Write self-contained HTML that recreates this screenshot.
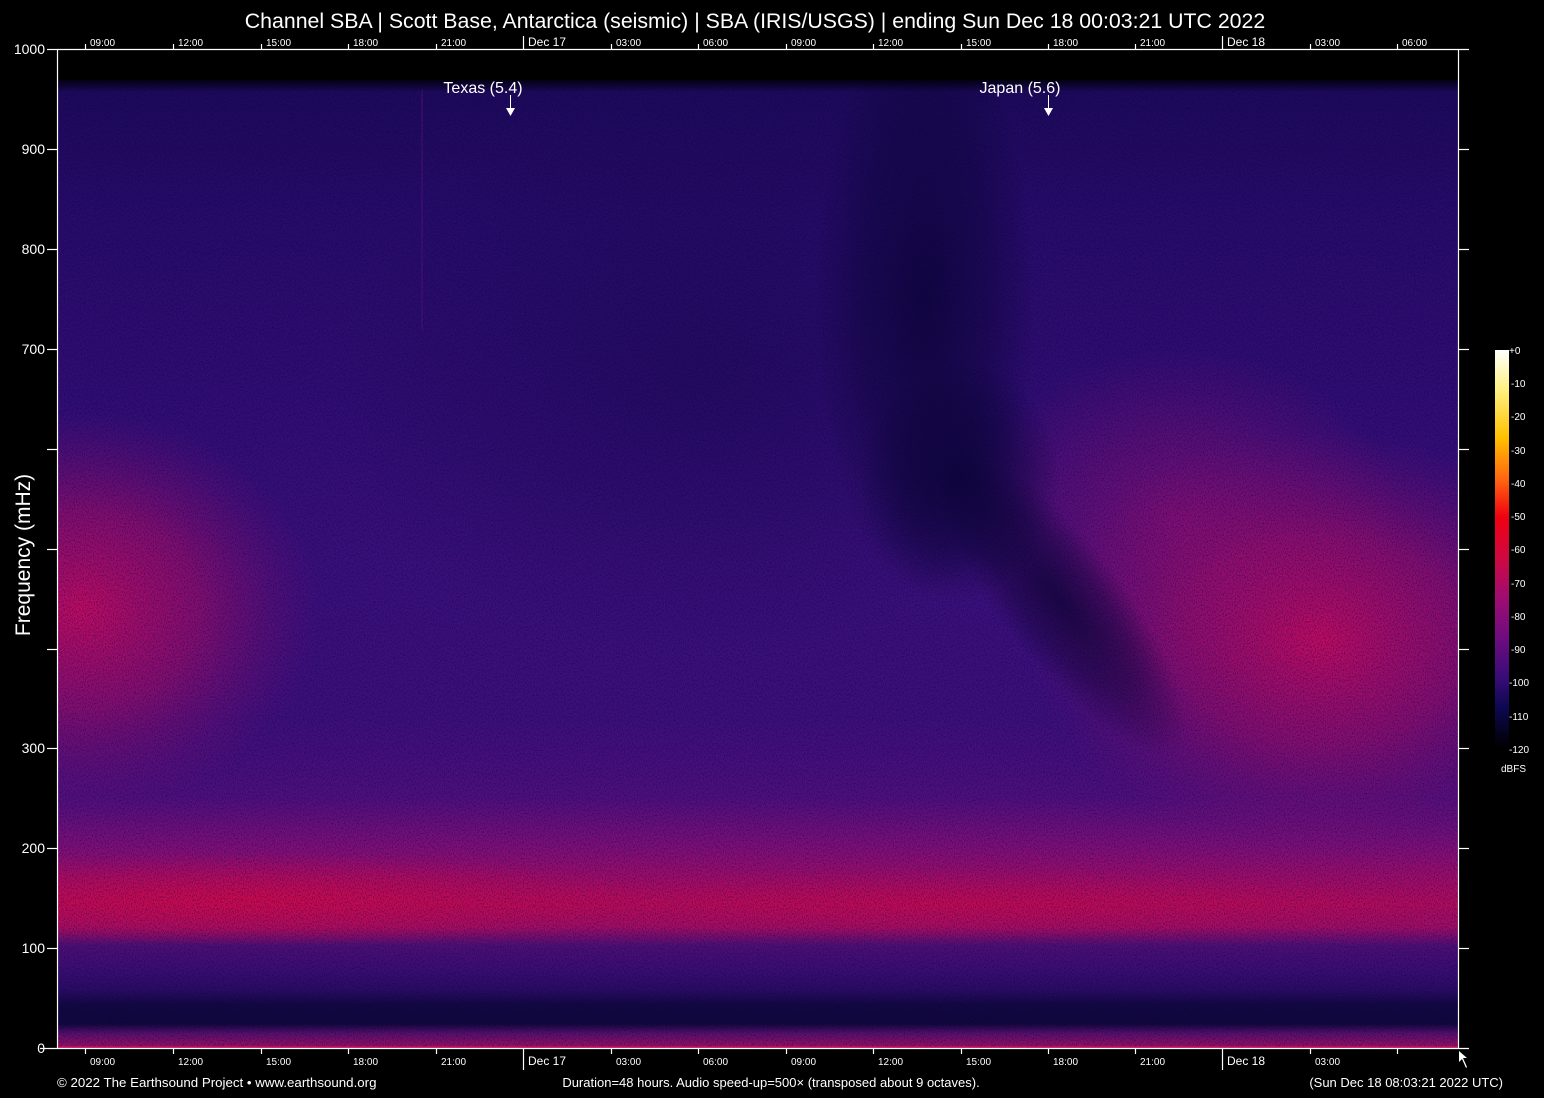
<!DOCTYPE html>
<html><head><meta charset="utf-8">
<style>
html,body{margin:0;padding:0;background:#000;}
svg{display:block;}
text{font-family:"Liberation Sans",Arial,sans-serif;fill:#fff;}
</style></head>
<body>
<svg width="1544" height="1098" viewBox="0 0 1544 1098" xmlns="http://www.w3.org/2000/svg">
<defs>
  <linearGradient id="base" x1="0" y1="80" x2="0" y2="1048" gradientUnits="userSpaceOnUse">
    <stop offset="0" stop-color="#1e0a56"/>
    <stop offset="0.15" stop-color="#2a0c68"/>
    <stop offset="0.35" stop-color="#340e72"/>
    <stop offset="0.5" stop-color="#3c1078"/>
    <stop offset="0.66" stop-color="#3e1078"/>
    <stop offset="0.74" stop-color="#50107a"/>
    <stop offset="0.79" stop-color="#7e1076"/>
    <stop offset="0.82" stop-color="#9c0e68"/>
    <stop offset="0.85" stop-color="#b40c5a"/>
    <stop offset="0.875" stop-color="#a20e62"/>
    <stop offset="0.895" stop-color="#4e1072"/>
    <stop offset="0.92" stop-color="#3c0e6e"/>
    <stop offset="0.94" stop-color="#2c0c62"/>
    <stop offset="0.955" stop-color="#14083e"/>
    <stop offset="0.975" stop-color="#12083a"/>
    <stop offset="0.985" stop-color="#5a1068"/>
    <stop offset="1" stop-color="#a01060"/>
  </linearGradient>
  <radialGradient id="mag"><stop offset="0" stop-color="#c00c5e" stop-opacity="1"/><stop offset="0.5" stop-color="#a80e66" stop-opacity="0.65"/><stop offset="1" stop-color="#800e70" stop-opacity="0"/></radialGradient>
  <radialGradient id="mag2"><stop offset="0" stop-color="#8a1072" stop-opacity="0.8"/><stop offset="1" stop-color="#8a1072" stop-opacity="0"/></radialGradient>
  <radialGradient id="dark"><stop offset="0" stop-color="#0a0430" stop-opacity="0.75"/><stop offset="0.6" stop-color="#0a0430" stop-opacity="0.4"/><stop offset="1" stop-color="#0a0430" stop-opacity="0"/></radialGradient>
  <radialGradient id="dark2"><stop offset="0" stop-color="#140844" stop-opacity="0.4"/><stop offset="1" stop-color="#140844" stop-opacity="0"/></radialGradient>
  <radialGradient id="red"><stop offset="0" stop-color="#d80a44" stop-opacity="0.7"/><stop offset="1" stop-color="#d80a44" stop-opacity="0"/></radialGradient>
  <linearGradient id="cbar" x1="0" y1="0" x2="0" y2="1">
    <stop offset="0" stop-color="#ffffff"/>
    <stop offset="0.1" stop-color="#fff080"/>
    <stop offset="0.22" stop-color="#ffc000"/>
    <stop offset="0.33" stop-color="#ff6010"/>
    <stop offset="0.42" stop-color="#f00010"/>
    <stop offset="0.52" stop-color="#d00840"/>
    <stop offset="0.62" stop-color="#a00c70"/>
    <stop offset="0.72" stop-color="#700c80"/>
    <stop offset="0.82" stop-color="#3a0c78"/>
    <stop offset="0.9" stop-color="#0c0850"/>
    <stop offset="1" stop-color="#000000"/>
  </linearGradient>
  <linearGradient id="topfade" x1="0" y1="0" x2="0" y2="1">
    <stop offset="0" stop-color="#000"/>
    <stop offset="1" stop-color="#000" stop-opacity="0"/>
  </linearGradient>
  <filter id="noise" x="0" y="0" width="100%" height="100%">
    <feTurbulence type="fractalNoise" baseFrequency="0.9 0.6" numOctaves="2" seed="3"/>
    <feColorMatrix type="matrix" values="0 0 0 0 0  0 0 0 0 0  0 0 0 0 0.1  0 0 0 -2.2 1.25"/>
  </filter>
  <clipPath id="plot"><rect x="58" y="50" width="1400" height="998"/></clipPath>
</defs>

<rect width="1544" height="1098" fill="#000"/>

<g clip-path="url(#plot)">
  <rect x="58" y="80" width="1400" height="968" fill="url(#base)"/>
  <ellipse cx="700" cy="380" rx="380" ry="280" fill="url(#dark2)"/>
  <ellipse cx="80" cy="610" rx="240" ry="200" fill="url(#mag)"/>
  <ellipse cx="1180" cy="520" rx="220" ry="170" fill="url(#mag2)"/>
  <ellipse cx="1320" cy="640" rx="290" ry="210" fill="url(#mag)"/>
  <ellipse cx="925" cy="300" rx="110" ry="300" fill="url(#dark)"/>
  <ellipse cx="1060" cy="600" rx="60" ry="190" transform="rotate(-38 1060 600)" fill="url(#dark)"/>
  <ellipse cx="960" cy="480" rx="100" ry="120" fill="url(#dark)"/>
  <ellipse cx="250" cy="900" rx="420" ry="45" fill="url(#red)"/>
  <ellipse cx="950" cy="905" rx="500" ry="35" fill="url(#red)" opacity="0.6"/>
  <rect x="421" y="90" width="2" height="240" fill="#5a1478" opacity="0.4"/>
  <rect x="58" y="50" width="1400" height="30" fill="#000"/>
  <rect x="58" y="78" width="1400" height="14" fill="url(#topfade)"/>
  <rect x="58" y="80" width="1400" height="968" filter="url(#noise)" opacity="0.55"/>
</g>

<g stroke="#fff" stroke-width="1.2" fill="none">
  <line x1="57" y1="49.5" x2="1469" y2="49.5"/>
  <line x1="57.5" y1="49" x2="57.5" y2="1049"/>
  <line x1="1458.5" y1="49" x2="1458.5" y2="1049"/>
  <line x1="40" y1="1048.5" x2="1469" y2="1048.5"/>
  <line x1="47" y1="49.5" x2="57" y2="49.5"/>
  <line x1="47" y1="149.5" x2="57" y2="149.5"/>
  <line x1="47" y1="249.5" x2="57" y2="249.5"/>
  <line x1="47" y1="349.5" x2="57" y2="349.5"/>
  <line x1="47" y1="449.5" x2="57" y2="449.5"/>
  <line x1="47" y1="549.5" x2="57" y2="549.5"/>
  <line x1="47" y1="649.5" x2="57" y2="649.5"/>
  <line x1="47" y1="748.5" x2="57" y2="748.5"/>
  <line x1="47" y1="848.5" x2="57" y2="848.5"/>
  <line x1="47" y1="948.5" x2="57" y2="948.5"/>
  <line x1="1459" y1="149.5" x2="1469" y2="149.5"/>
  <line x1="1459" y1="249.5" x2="1469" y2="249.5"/>
  <line x1="1459" y1="349.5" x2="1469" y2="349.5"/>
  <line x1="1459" y1="449.5" x2="1469" y2="449.5"/>
  <line x1="1459" y1="549.5" x2="1469" y2="549.5"/>
  <line x1="1459" y1="649.5" x2="1469" y2="649.5"/>
  <line x1="1459" y1="748.5" x2="1469" y2="748.5"/>
  <line x1="1459" y1="848.5" x2="1469" y2="848.5"/>
  <line x1="1459" y1="948.5" x2="1469" y2="948.5"/>
  <path d="M85.5 49V44 M173.5 49V44 M261.5 49V44 M348.5 49V44 M436.5 49V44 M523.5 49V36 M611.5 49V44 M698.5 49V44 M786.5 49V44 M873.5 49V44 M961.5 49V44 M1048.5 49V44 M1135.5 49V44 M1222.5 49V36 M1310.5 49V44 M1397.5 49V44"/>
  <path d="M85.5 1049V1054 M173.5 1049V1054 M261.5 1049V1054 M348.5 1049V1054 M436.5 1049V1054 M523.5 1049V1070 M611.5 1049V1054 M698.5 1049V1054 M786.5 1049V1054 M873.5 1049V1054 M961.5 1049V1054 M1048.5 1049V1054 M1135.5 1049V1054 M1222.5 1049V1070 M1310.5 1049V1054 M1397.5 1049V1054"/>
</g>
<line x1="58" y1="1047" x2="1458" y2="1047" stroke="#e0105a" stroke-width="1"/>

<text x="755" y="28" font-size="21.3" text-anchor="middle">Channel SBA | Scott Base, Antarctica (seismic) | SBA (IRIS/USGS) | ending Sun Dec 18 00:03:21 UTC 2022</text>

<g font-size="10">
  <text x="90" y="46">09:00</text>
  <text x="178" y="46">12:00</text>
  <text x="266" y="46">15:00</text>
  <text x="353" y="46">18:00</text>
  <text x="441" y="46">21:00</text>
  <text x="616" y="46">03:00</text>
  <text x="703" y="46">06:00</text>
  <text x="791" y="46">09:00</text>
  <text x="878" y="46">12:00</text>
  <text x="966" y="46">15:00</text>
  <text x="1053" y="46">18:00</text>
  <text x="1140" y="46">21:00</text>
  <text x="1315" y="46">03:00</text>
  <text x="1402" y="46">06:00</text>
</g>
<text x="528" y="46" font-size="12">Dec 17</text>
<text x="1227" y="46" font-size="12">Dec 18</text>

<g font-size="10">
  <text x="90" y="1065">09:00</text>
  <text x="178" y="1065">12:00</text>
  <text x="266" y="1065">15:00</text>
  <text x="353" y="1065">18:00</text>
  <text x="441" y="1065">21:00</text>
  <text x="616" y="1065">03:00</text>
  <text x="703" y="1065">06:00</text>
  <text x="791" y="1065">09:00</text>
  <text x="878" y="1065">12:00</text>
  <text x="966" y="1065">15:00</text>
  <text x="1053" y="1065">18:00</text>
  <text x="1140" y="1065">21:00</text>
  <text x="1315" y="1065">03:00</text>
</g>
<text x="528" y="1065" font-size="12">Dec 17</text>
<text x="1227" y="1065" font-size="12">Dec 18</text>

<g font-size="14" text-anchor="end">
  <text x="45" y="54">1000</text>
  <text x="45" y="154">900</text>
  <text x="45" y="254">800</text>
  <text x="45" y="354">700</text>
  <text x="45" y="753">300</text>
  <text x="45" y="853">200</text>
  <text x="45" y="953">100</text>
  <text x="45" y="1053">0</text>
</g>
<text transform="translate(30,555) rotate(-90)" font-size="21" text-anchor="middle">Frequency (mHz)</text>

<text x="483" y="93" font-size="16" text-anchor="middle">Texas (5.4)</text>
<line x1="510.5" y1="95" x2="510.5" y2="108" stroke="#fff" stroke-width="1"/>
<polygon points="506,108 515,108 510.5,116" fill="#fff"/>
<text x="1020" y="93" font-size="16" text-anchor="middle">Japan (5.6)</text>
<line x1="1048.5" y1="95" x2="1048.5" y2="108" stroke="#fff" stroke-width="1"/>
<polygon points="1044,108 1053,108 1048.5,116" fill="#fff"/>

<rect x="1495" y="350" width="14" height="398" fill="url(#cbar)"/>
<g font-size="10" fill="#ddd">
  <text x="1509" y="354">+0</text>
  <text x="1511" y="387">-10</text>
  <text x="1511" y="420">-20</text>
  <text x="1511" y="454">-30</text>
  <text x="1511" y="487">-40</text>
  <text x="1511" y="520">-50</text>
  <text x="1511" y="553">-60</text>
  <text x="1511" y="587">-70</text>
  <text x="1511" y="620">-80</text>
  <text x="1511" y="653">-90</text>
  <text x="1509" y="686">-100</text>
  <text x="1509" y="720">-110</text>
  <text x="1509" y="753">-120</text>
  <text x="1501" y="772">dBFS</text>
</g>

<path d="M1459 1051 L1459 1062 L1462 1059 L1466 1068 L1467 1067 L1463 1058 L1467 1058 Z" fill="#fff"/>

<text x="57" y="1087" font-size="13.3">© 2022 The Earthsound Project • www.earthsound.org</text>
<text x="771" y="1087" font-size="13" text-anchor="middle">Duration=48 hours. Audio speed-up=500× (transposed about 9 octaves).</text>
<text x="1503" y="1087" font-size="13" text-anchor="end">(Sun Dec 18 08:03:21 2022 UTC)</text>
</svg>
</body></html>
